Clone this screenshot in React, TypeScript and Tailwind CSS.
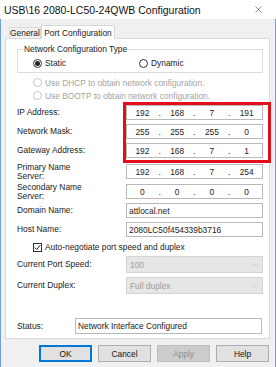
import React from 'react';
import { X, ChevronDown } from 'lucide-react';

const font = { fontFamily: '"Liberation Sans", Arial, sans-serif' };

function Radio({ checked, disabled }: { checked?: boolean; disabled?: boolean }) {
  return (
    <span
      className={`w-[9px] h-[9px] rounded-full border flex items-center justify-center bg-white ${
        disabled ? 'border-[#c4c4c4]' : 'border-[#333]'
      }`}
    >
      {checked && <span className="w-[5px] h-[5px] rounded-full bg-[#222]" />}
    </span>
  );
}

function IpField({ parts }: { parts: string[] }) {
  return (
    <div className="w-[137px] h-[15px] border border-[#b9b9b9] bg-white flex items-center text-[#222]">
      {parts.map((p, i) => (
        <React.Fragment key={i}>
          <span className="flex-1 text-center">{p}</span>
          {i < 3 && <span className="w-[4px] text-center">.</span>}
        </React.Fragment>
      ))}
    </div>
  );
}

function TextField({ value, width = 'w-[137px]', h = 'h-[15px]' }: { value: string; width?: string; h?: string }) {
  return (
    <div className={`${width} ${h} border border-[#b9b9b9] bg-white flex items-center px-[2px] text-[#222]`}>
      {value}
    </div>
  );
}

function Select({ value }: { value: string }) {
  return (
    <div className="w-[137px] h-[17px] border border-[#d4d4d4] bg-[#e6e6e6] flex items-center justify-between px-[3px] text-[#9b9b9b]">
      <span>{value}</span>
      <ChevronDown size={8} strokeWidth={1.5} className="text-[#b0b0b0]" />
    </div>
  );
}

function Row({ label, children, className = 'h-[15px]' }: { label: React.ReactNode; children: React.ReactNode; className?: string }) {
  return (
    <div className={`flex items-center ${className}`}>
      <div className="w-[109px] leading-[9px] text-[#222]">{label}</div>
      {children}
    </div>
  );
}

function Button({ children, primary, disabled }: { children: React.ReactNode; primary?: boolean; disabled?: boolean }) {
  return (
    <div
      className={`w-[53px] h-[17px] flex items-center justify-center border ${
        primary
          ? 'border-[#0078d7] shadow-[inset_0_0_0_1px_#0078d7] bg-[#e1e1e1] text-[#111]'
          : disabled
          ? 'border-[#bfbfbf] bg-[#cccccc] text-[#8d8d8d]'
          : 'border-[#adadad] bg-[#e1e1e1] text-[#111]'
      }`}
    >
      {children}
    </div>
  );
}

export default function App() {
  return (
    <div
      className="relative w-[276px] h-[367px] bg-[#f0f0f0] text-[8.4px] leading-[10px] overflow-hidden shadow-[inset_1px_0_0_#6f9fd8,inset_-1px_0_0_#6f9fd8]"
      style={font}
    >
      {/* Title bar */}
      <div className="h-[19px] bg-white flex items-center justify-between pl-[4px] pr-[12px] text-[10.5px] text-[#111]">
        <span>USB\16 2080-LC50-24QWB Configuration</span>
        <X size={11} strokeWidth={1.2} className="text-[#333]" />
      </div>

      {/* Tabs */}
      <div className="mt-[5px] h-[14px] flex items-end pl-[9px]">
        <div className="h-[11px] w-[32px] border border-b-0 border-[#d9d9d9] flex items-center justify-center text-[#222]">General</div>
        <div className="h-[14px] w-[74px] -mb-px z-10 bg-white border border-b-0 border-[#d9d9d9] flex items-center justify-center text-[#222] whitespace-nowrap">
          Port Configuration
        </div>
      </div>

      {/* Panel */}
      <div className="ml-[5px] w-[265px] h-[301px] border border-[#d9d9d9] bg-white pl-[11px] pt-[5px] flex flex-col">
        <fieldset className="w-[246px] border border-[#dcdcdc] pb-[1px]">
          <legend className="ml-[5px] px-[1px] text-[#222] leading-[11px]">Network Configuration Type</legend>
          <div className="h-[16px] pl-[15px] flex items-center">
            <div className="flex items-center gap-[3px] w-[106px]">
              <Radio checked />
              <span className="text-[#222]">Static</span>
            </div>
            <div className="flex items-center gap-[3px]">
              <Radio />
              <span className="text-[#222]">Dynamic</span>
            </div>
          </div>
        </fieldset>

        <div className="mt-[3px] pl-[16px] text-[#a3a3a3]">
          <div className="h-[13px] flex items-center gap-[3px]">
            <Radio disabled />
            <span>Use DHCP to obtain network configuration.</span>
          </div>
          <div className="h-[13px] flex items-center gap-[3px]">
            <Radio disabled />
            <span>Use BOOTP to obtain network configuration.</span>
          </div>
        </div>

        <div className="mt-[3px] flex flex-col gap-[4px]">
          <Row label="IP Address:">
            <IpField parts={['192', '168', '7', '191']} />
          </Row>
          <Row label="Network Mask:">
            <IpField parts={['255', '255', '255', '0']} />
          </Row>
          <Row label="Gateway Address:">
            <IpField parts={['192', '168', '7', '1']} />
          </Row>
          <Row label={<>Primary Name<br />Server:</>} className="h-[15px] mt-[2px]">
            <IpField parts={['192', '168', '7', '254']} />
          </Row>
          <Row label={<>Secondary Name<br />Server:</>} className="h-[15px] mt-[1px]">
            <IpField parts={['0', '0', '0', '0']} />
          </Row>
          <Row label="Domain Name:">
            <TextField value="attlocal.net" />
          </Row>
          <Row label="Host Name:">
            <TextField value="2080LC50f454339b3716" />
          </Row>
        </div>

        <div className="mt-[4px] h-[12px] pl-[16px] flex items-center gap-[3px] text-[#222]">
          <span className="w-[9px] h-[9px] border border-[#333] bg-white flex items-center justify-center">
            <svg width="7" height="7" viewBox="0 0 7 7">
              <path d="M0.8 3.6 L2.7 5.5 L6.2 1.2" fill="none" stroke="#222" strokeWidth="1" />
            </svg>
          </span>
          <span>Auto-negotiate port speed and duplex</span>
        </div>

        <Row label="Current Port Speed:" className="mt-[3px] h-[17px]">
          <Select value="100" />
        </Row>
        <Row label="Current Duplex:" className="mt-[4px] h-[17px]">
          <Select value="Full duplex" />
        </Row>

        <div className="mt-[24px] flex items-center">
          <div className="w-[58px] text-[#222]">Status:</div>
          <TextField value="Network Interface Configured" width="w-[187px]" h="h-[16px]" />
        </div>
      </div>

      {/* Buttons */}
      <div className="mt-[6px] pl-[39px] flex gap-[6px]">
        <Button primary>OK</Button>
        <Button>Cancel</Button>
        <Button disabled>Apply</Button>
        <Button>Help</Button>
      </div>

      {/* Red annotation box */}
      <div className="absolute left-[123px] top-[102px] w-[148px] h-[61px] border-[3px] border-[#e3101b] pointer-events-none" />
    </div>
  );
}
